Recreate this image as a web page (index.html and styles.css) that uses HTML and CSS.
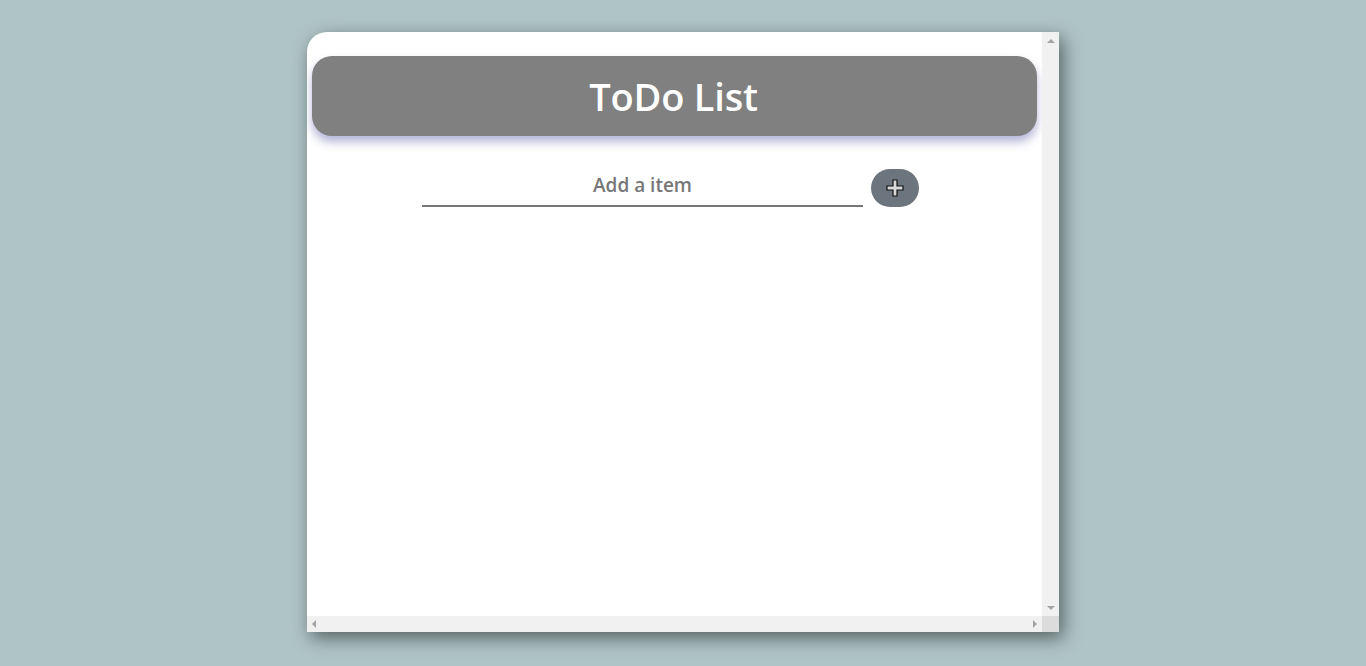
FILE: index.html
```html
<!DOCTYPE html>
<html lang="en">
<head>
<meta charset="utf-8">
<title>ToDo List</title>
<link rel="stylesheet" href="styles.css">
</head>
<body>
<div class="card">
  <div class="content">
    <header class="title-bar"><h1 class="title">ToDo List</h1></header>
    <div class="add-row">
      <input class="add-input" type="text" placeholder="Add a item">
      <button class="add-btn" type="button" aria-label="Add">
        <svg width="18" height="18" viewBox="0 0 18 18"><path d="M7 1h4v6h6v4h-6v6H7v-6H1V7h6z" fill="#d9d9d9" stroke="#111" stroke-width="1.2"/></svg>
      </button>
    </div>
  </div>
  <div class="vbar">
    <span class="arrow up"></span>
    <span class="arrow down"></span>
  </div>
  <div class="hbar">
    <span class="arrow left"></span>
    <span class="arrow right"></span>
  </div>
  <div class="corner"></div>
</div>
</body>
</html>
```
FILE: styles.css
```css
html, body {
  margin: 0;
  height: 100%;
}
body {
  background: #afc4c5;
  font-family: "Open Sans", "Noto Sans", sans-serif;
  padding-top: 32px;
  box-sizing: border-box;
}
.card {
  width: 752px;
  height: 600px;
  margin: 0 auto;
  background: #fff;
  border-radius: 20px 0 0 0;
  display: grid;
  grid-template-columns: 1fr 17px;
  grid-template-rows: 1fr 16px;
  box-shadow: 4px 6px 18px rgba(0, 0, 0, 0.5);
  overflow: hidden;
}
.content {
  padding: 24px 5px 0;
}
.title-bar {
  height: 80px;
  background: #808080;
  border-radius: 20px;
  box-shadow: 0 6px 10px rgba(90, 90, 170, 0.45);
  display: flex;
  align-items: center;
  justify-content: center;
}
.title {
  margin: 0;
  color: #fff;
  font-size: 38px;
  font-weight: 600;
  letter-spacing: -0.2px;
  padding-right: 2px;
}
.add-row {
  display: flex;
  align-items: flex-end;
  gap: 8px;
  margin-top: 33px;
  padding-left: 110px;
}
.add-input {
  width: 441px;
  height: 32px;
  box-sizing: content-box;
  padding: 0 0 4px;
  border: none;
  border-bottom: 2px solid #777;
  outline: none;
  text-align: center;
  font-family: "Open Sans", "Noto Sans", sans-serif;
  font-size: 19px;
  font-weight: 600;
  color: #777;
  background: transparent;
}
.add-input::placeholder {
  color: #777;
}
.add-btn {
  width: 48px;
  height: 38px;
  border: none;
  border-radius: 19px;
  background: #6c757d;
  padding: 0;
  display: flex;
  align-items: center;
  justify-content: center;
}
.vbar, .hbar {
  background: #f1f1f1;
  display: flex;
  justify-content: space-between;
  align-items: center;
}
.vbar {
  flex-direction: column;
  padding: 7px 0 6px;
}
.hbar {
  padding: 0 5px 0 5px;
}
.corner {
  background: #dcdcdc;
}
.arrow {
  width: 0;
  height: 0;
  border: 4px solid transparent;
}
.arrow.up { border-bottom-color: #a3a3a3; border-top-width: 0; }
.arrow.down { border-top-color: #a3a3a3; border-bottom-width: 0; }
.arrow.left { border-right-color: #a3a3a3; border-left-width: 0; }
.arrow.right { border-left-color: #a3a3a3; border-right-width: 0; }
```
